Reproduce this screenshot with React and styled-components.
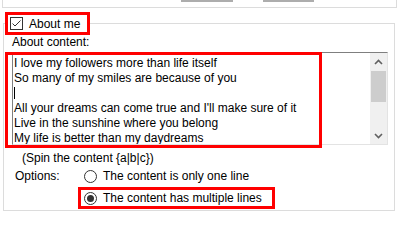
import React from 'react';
import styled, { createGlobalStyle } from 'styled-components';

const GlobalStyle = createGlobalStyle`
  html, body {
    margin: 0;
    padding: 0;
    background: #ffffff;
  }
  body {
    font-family: "Liberation Sans", Arial, sans-serif;
    font-size: 12px;
    color: #000;
  }
`;

const Page = styled.div`
  width: 398px;
  height: 216px;
  overflow: hidden;
  background: #fff;
`;

// bottom of the group box above this one (cut off by the window)
const PrevGroup = styled.div`
  margin-left: 2px;
  width: 395px;
  height: 8px;
  box-sizing: border-box;
  border: 1px solid #dcdcdc;
  border-top: none;
  display: flex;
  align-items: flex-start;
`;

const ButtonStub = styled.div`
  margin-left: ${(p) => p.$offset}px;
  width: ${(p) => p.$width}px;
  height: 2px;
  background: #adadad;
`;

const Group = styled.fieldset`
  margin: 4px 0 0 3px;
  padding: 0;
  width: 392px;
  height: 199px;
  box-sizing: border-box;
  border: 1px solid #dcdcdc;
  min-width: 0;
`;

const Legend = styled.legend`
  margin-left: 1px;
  padding: 2px 7px 0 2px;
  height: 23px;
  box-sizing: border-box;
  border: 3px solid #ff0000;
  display: flex;
  align-items: flex-start;
  gap: 6px;
  line-height: 14px;
`;

const CheckBox = styled.span`
  width: 13px;
  height: 13px;
  box-sizing: border-box;
  border: 1px solid #333;
  background: #fff;
  display: inline-flex;
  align-items: center;
  justify-content: center;
`;

const Label = styled.div`
  margin-left: ${(p) => p.$indent || 0}px;
  margin-top: ${(p) => p.$top || 0}px;
  line-height: ${(p) => p.$lh || 15}px;
  white-space: nowrap;
`;

const TextBox = styled.div`
  position: relative;
  margin: 2px 0 0 8px;
  width: 376px;
  height: 93px;
  box-sizing: border-box;
  border: 1px solid #e3e3e3;
  border-top-color: #7f7f7f;
  border-left-color: #7f7f7f;
  background: #fff;
  display: flex;
`;

const TextLines = styled.div`
  flex: 1;
  padding: 3px 0 0 1px;
  line-height: 15px;
  overflow: hidden;
  white-space: nowrap;
`;

const Caret = styled.span`
  display: inline-block;
  width: 1px;
  height: 12px;
  background: #000;
  vertical-align: -2px;
`;

const ScrollBar = styled.div`
  width: 17px;
  background: #f0f0f0;
  display: flex;
  flex-direction: column;
`;

const ScrollArrow = styled.div`
  height: 17px;
  display: flex;
  align-items: center;
  justify-content: center;
`;

const Track = styled.div`
  flex: 1;
  padding-top: 1px;
`;

const Thumb = styled.div`
  margin: 0 1px;
  height: 31px;
  background: #cdcdcd;
`;

const Highlight = styled.div`
  position: absolute;
  left: -8px;
  top: -1px;
  width: 317px;
  height: 96px;
  box-sizing: border-box;
  border: 3px solid #ff0000;
  pointer-events: none;
`;

const OptionsGrid = styled.div`
  display: grid;
  grid-template-columns: 63px auto;
  margin-left: 11px;
`;

const OptionsLabel = styled.div`
  line-height: 22px;
`;

const RadioList = styled.div`
  display: flex;
  flex-direction: column;
  align-items: flex-start;
`;

const RadioItem = styled.div`
  height: 22px;
  box-sizing: border-box;
  border: 3px solid ${(p) => (p.$highlight ? '#ff0000' : 'transparent')};
  padding: 0 10px 0 3px;
  display: flex;
  align-items: center;
  gap: 6px;
  white-space: nowrap;
`;

const Radio = styled.span`
  width: 13px;
  height: 13px;
  box-sizing: border-box;
  border: 1px solid #333;
  border-radius: 50%;
  background: #fff;
  display: inline-flex;
  align-items: center;
  justify-content: center;
  &::after {
    content: '';
    display: ${(p) => (p.$checked ? 'block' : 'none')};
    width: 7px;
    height: 7px;
    border-radius: 50%;
    background: #333;
  }
`;

const lines = [
  'I love my followers more than life itself',
  'So many of my smiles are because of you',
  null,
  "All your dreams can come true and I'll make sure of it",
  'Live in the sunshine where you belong',
  'My life is better than my daydreams',
];

function Chevron({ up }) {
  return (
    <svg width="9" height="6" viewBox="0 0 9 6">
      <polyline
        points={up ? '1,5 4.5,1.5 8,5' : '1,1 4.5,4.5 8,1'}
        fill="none"
        stroke="#606060"
        strokeWidth="1.6"
      />
    </svg>
  );
}

export default function App() {
  return (
    <Page>
      <GlobalStyle />
      <PrevGroup>
        <ButtonStub $offset={178} $width={52} />
        <ButtonStub $offset={30} $width={51} />
      </PrevGroup>
      <Group>
        <Legend>
          <CheckBox>
            <svg width="11" height="11" viewBox="0 0 11 11">
              <polyline points="1.5,5.5 4,8 9.5,2.5" fill="none" stroke="#333" strokeWidth="1" />
            </svg>
          </CheckBox>
          About me
        </Legend>
        <Label $indent={8}>About content:</Label>
        <TextBox>
          <TextLines>
            {lines.map((l, i) => (
              <div key={i}>{l === null ? <Caret /> : l}</div>
            ))}
          </TextLines>
          <ScrollBar>
            <ScrollArrow><Chevron up /></ScrollArrow>
            <Track><Thumb /></Track>
            <ScrollArrow><Chevron /></ScrollArrow>
          </ScrollBar>
          <Highlight />
        </TextBox>
        <Label $indent={18} $top={7} $lh={13}>(Spin the content {'{a|b|c}'})</Label>
        <OptionsGrid>
          <OptionsLabel>Options:</OptionsLabel>
          <RadioList>
            <RadioItem>
              <Radio />
              The content is only one line
            </RadioItem>
            <RadioItem $highlight>
              <Radio $checked />
              The content has multiple lines
            </RadioItem>
          </RadioList>
        </OptionsGrid>
      </Group>
    </Page>
  );
}
